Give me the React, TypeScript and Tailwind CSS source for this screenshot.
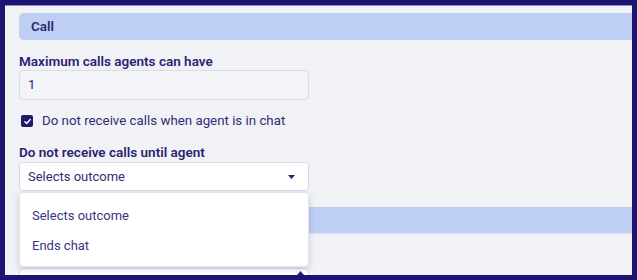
import React from "react";

const font = { fontFamily: "Roboto, 'Noto Sans', sans-serif" };

const App = () => {
  return (
    <div
      className="w-[637px] h-[280px] bg-[#1c1470] pl-[5px] pt-[5px] pr-[5px] pb-[5px]"
      style={font}
    >
      <div className="relative h-full overflow-hidden bg-[#f1f2f6] border-t border-[#8d87c6] pl-[14px] pt-[7px] text-[#2a2270]">
        {/* Section: Call */}
        <div className="flex h-[27px] items-center rounded-l-[5px] bg-[#bfcef5] pl-3 text-[13.5px] font-semibold text-[#2d2a6e]">
          Call
        </div>

        <div className="mt-[13px] text-[13.5px] leading-4 font-semibold">
          Maximum calls agents can have
        </div>
        <div className="mt-[1px] flex h-[30px] w-[290px] items-center rounded-[4px] border border-[#dcdde3] bg-[#f3f4f7] px-2 text-[13px]">
          1
        </div>

        <div className="mt-[14px] flex h-[14px] items-center">
          <div className="ml-[2px] flex h-[12px] w-[12px] items-center justify-center rounded-[2px] bg-[#23196b]">
            <svg width="9" height="9" viewBox="0 0 10 10" fill="none">
              <path d="M2 5.2 4.1 7.2 8 2.8" stroke="#fff" strokeWidth="1.6" strokeLinecap="round" strokeLinejoin="round" />
            </svg>
          </div>
          <span className="ml-[9px] text-[13.3px] text-[#322c78]">
            Do not receive calls when agent is in chat
          </span>
        </div>

        <div className="mt-[16px] text-[13.5px] leading-4 font-semibold">
          Do not receive calls until agent
        </div>
        <div className="relative z-10 mt-[2px] w-[290px]">
          <div className="flex h-[29px] items-center justify-between rounded-[4px] border border-[#dcdde3] bg-white pl-2 pr-[13px] text-[13px] text-[#322c78]">
            <span>Selects outcome</span>
            <svg width="7" height="4" viewBox="0 0 7 4">
              <path d="M0 0h7L3.5 4z" fill="#2a2270" />
            </svg>
          </div>
          {/* open menu */}
          <div className="absolute left-0 top-[30px] h-[75px] w-[290px] rounded-[4px] border border-[#e3e4ea] bg-white pt-2 text-[13px] text-[#3a3482] shadow-[0_2px_6px_rgba(30,20,90,0.18)]">
            <div className="flex h-[30px] items-center pl-3">Selects outcome</div>
            <div className="flex h-[30px] items-center pl-3">Ends chat</div>
          </div>
        </div>

        {/* next section, mostly under the menu */}
        <div className="mt-[16px] h-[27px] rounded-l-[5px] border-b border-[#dde3f6] bg-[#bfcef5]"></div>

        <div className="mt-[34px] flex items-start">
          <div className="flex h-[30px] w-[290px] justify-end rounded-[4px] border border-[#dcdde3] bg-white pr-[4px] pt-[2px]">
            <svg width="7" height="4" viewBox="0 0 7 4">
              <path d="M3.5 0 7 4H0z" fill="#2a2270" />
            </svg>
          </div>
          <span className="ml-[21px] mt-[3px] text-[13px] text-[#6b6ff0]">
            Consider agent available
          </span>
        </div>
      </div>
    </div>
  );
};

export default App;
